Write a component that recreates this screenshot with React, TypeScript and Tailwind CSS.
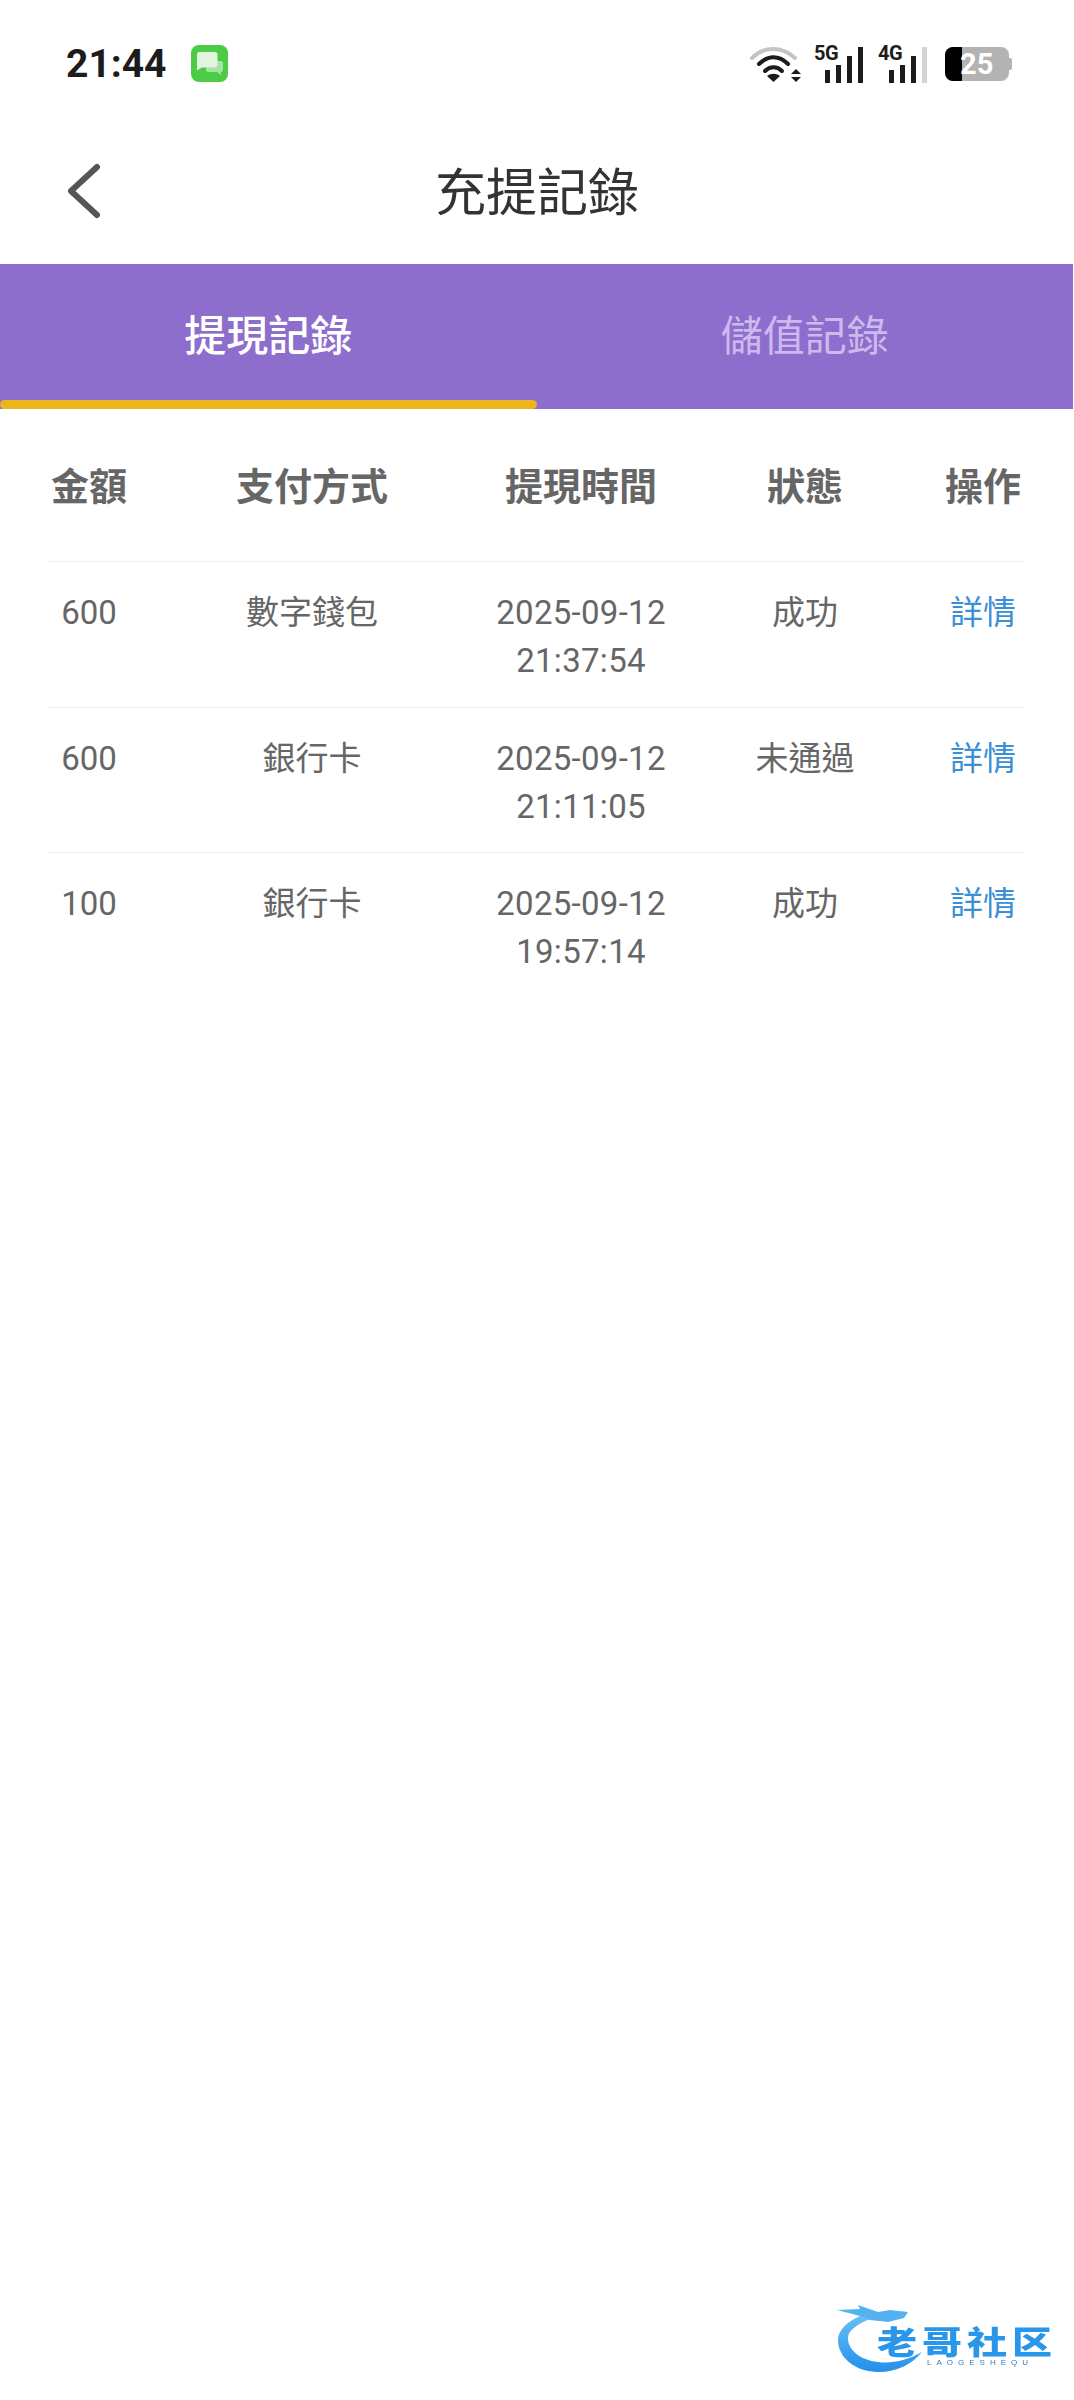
const rows = [
  { amount: "600", method: "數字錢包", date: "2025-09-12", time: "21:37:54", status: "成功" },
  { amount: "600", method: "銀行卡", date: "2025-09-12", time: "21:11:05", status: "未通過" },
  { amount: "100", method: "銀行卡", date: "2025-09-12", time: "19:57:14", status: "成功" },
];

const headers = ["金額", "支付方式", "提現時間", "狀態", "操作"];

const cols = "grid grid-cols-[82px_364px_174px_274px_82px]";

function Wifi() {
  return (
    <svg width="52" height="36" viewBox="0 0 52 36" fill="none" strokeLinecap="round">
      <path d="M2 12C14 0 32 0 45 12" stroke="#c4c4c4" strokeWidth="4" />
      <path d="M9 18C18 9 29 9 38 18" stroke="#1c1c1c" strokeWidth="4" />
      <path d="M15 25C20 20 27 20 32 25" stroke="#1c1c1c" strokeWidth="4" />
      <path d="M23.500 36L17 30C21 27 26 27 30 30Z" fill="#1c1c1c" />
      <path d="M46 23L51 28H41Z" fill="#1c1c1c" />
      <path d="M46 36L51 31H41Z" fill="#1c1c1c" />
    </svg>
  );
}

function Signal({ label, lastOff }: { label: string; lastOff?: boolean }) {
  return (
    <div className="relative w-[49px] h-[38px]">
      <span className="absolute left-0 top-[-2px] text-[20px] leading-[20px] font-bold text-[#1c1c1c] tracking-[-0.5px] font-['Roboto',sans-serif]">
        {label}
      </span>
      <div className="absolute right-0 bottom-0 flex items-end gap-[6px]">
        <div className="w-[5px] h-[13px] bg-[#1c1c1c]" />
        <div className="w-[5px] h-[18px] bg-[#1c1c1c]" />
        <div className="w-[5px] h-[27px] bg-[#1c1c1c]" />
        <div className={`w-[5px] h-[36px] ${lastOff ? "bg-[#d4d4d4]" : "bg-[#1c1c1c]"}`} />
      </div>
    </div>
  );
}

function Battery() {
  return (
    <div className="flex items-center">
      <div className="relative w-[64px] h-[34px] rounded-[8px] bg-[#b3b3b3] overflow-hidden">
        <div className="absolute left-0 top-0 bottom-0 w-[17px] bg-black" />
        <span className="absolute left-[15px] top-0 text-[29px] leading-[34px] font-bold text-white font-['Roboto',sans-serif]">
          25
        </span>
      </div>
      <div className="w-[3px] h-[12px] rounded-r-[2px] bg-[#b3b3b3]" />
    </div>
  );
}

function Logo() {
  return (
    <div className="relative w-[254px] h-[110px]">
      <svg className="absolute left-0 top-0" width="110" height="90" viewBox="0 0 110 90" fill="none">
        <defs>
          <linearGradient id="dragon" x1="0" y1="0" x2="0" y2="1">
            <stop offset="0" stopColor="#6cc0f5" />
            <stop offset="1" stopColor="#2390ea" />
          </linearGradient>
        </defs>
        <path
          d="M45 24C28 30 18 40 18 50C18 68 36 82 58 82C78 82 92 74 102 62C88 70 72 74 58 72C40 70 28 60 28 48C28 40 38 34 52 28Z"
          fill="url(#dragon)"
        />
        <path d="M17 20L40 19L38 15L58 22L70 20L88 22L84 28L68 32L50 30L40 26Z" fill="#55b2f0" />
      </svg>
      <span className="absolute left-[57px] top-[35px] origin-left scale-x-125 text-[32px] leading-[30px] font-black text-[#2a96ea] whitespace-nowrap tracking-[4px] font-['Noto_Sans_CJK_SC',sans-serif]">
        老哥社区
      </span>
      <span className="absolute left-[107px] top-[68px] text-[8px] leading-[10px] text-[#2a7fc4] whitespace-nowrap tracking-[5px] font-['Liberation_Sans',sans-serif]">
        LAOGESHEQU
      </span>
    </div>
  );
}

export default function App() {
  return (
    <div className="relative w-[1074px] h-[2400px] bg-white overflow-hidden font-['Roboto','Noto_Sans_CJK_TC',sans-serif]">
      {/* status bar */}
      <div className="h-[127px] pl-[66px] pr-[62px] flex items-center justify-between">
        <div className="flex items-center gap-[24px]">
          <span className="text-[39px] leading-[44px] font-bold text-[#1c1c1c]">21:44</span>
          <div className="w-[37px] h-[37px] rounded-[8px] bg-[#4ccb45] flex items-center justify-center">
            <svg width="27" height="25" viewBox="0 0 27 25">
              <path d="M10 10H25C26 10 27 11 27 12V19C27 20 26 21 25 21V24L21 21H12C11 21 10 20 10 19Z" fill="#a5e3a1" />
              <path d="M3 1H19C20.500 1 21.500 2 21.500 3V14C21.500 15.500 20.500 16.500 19 16.500H6L1 19.500V3C1 2 2 1 3 1Z" fill="#e2f3e0" />
            </svg>
          </div>
        </div>
        <div className="flex items-center gap-[15px]">
          <div className="-mr-[3px]">
            <Wifi />
          </div>
          <Signal label="5G" />
          <Signal label="4G" lastOff />
          <div className="ml-[3px]">
            <Battery />
          </div>
        </div>
      </div>

      {/* title */}
      <div className="relative h-[137px] flex items-center justify-center">
        <svg className="absolute left-[66px] top-[36px]" width="36" height="56" viewBox="0 0 36 56" fill="none">
          <path d="M31 4L5 28L31 52" stroke="#555555" strokeWidth="6" strokeLinecap="round" strokeLinejoin="round" />
        </svg>
        <h1 className="text-[51px] leading-[64px] font-normal text-[#333333] mb-[4px]">充提記錄</h1>
      </div>

      {/* tabs */}
      <div className="flex h-[145px] bg-[#8e6ecc] w-[1073px]">
        <div className="relative w-1/2 flex items-center justify-center">
          <span className="text-[42px] leading-[56px] font-medium text-white">提現記錄</span>
          <div className="absolute left-0 right-0 bottom-0 h-[9px] rounded-full bg-[#eab51d]" />
        </div>
        <div className="w-1/2 flex items-center justify-center">
          <span className="text-[42px] leading-[56px] text-[#cdb9ee]">儲值記錄</span>
        </div>
      </div>

      {/* table */}
      <div className="mx-[48px] w-[976px]">
        <div className={`${cols} h-[153px] pt-[4px] items-center border-b border-[#eeeeee]`}>
          {headers.map((h) => (
            <div key={h} className="text-center text-[38px] leading-[48px] font-bold text-[#666666] whitespace-nowrap">
              {h}
            </div>
          ))}
        </div>
        {rows.map((r, i) => (
          <div
            key={i}
            className={`${cols} h-[145.500px] pt-[27px] text-center text-[33px] leading-[48px] text-[#666666] ${i < 2 ? "border-b border-[#eeeeee]" : ""}`}
          >
            <div>{r.amount}</div>
            <div>{r.method}</div>
            <div className="tracking-[0.3px]">
              {r.date}
              <br />
              {r.time}
            </div>
            <div>{r.status}</div>
            <div className="text-[#3a8fd6]">詳情</div>
          </div>
        ))}
      </div>

      {/* watermark */}
      <div className="absolute left-[820px] top-[2290px] blur-[0.6px]">
        <Logo />
      </div>
    </div>
  );
}
